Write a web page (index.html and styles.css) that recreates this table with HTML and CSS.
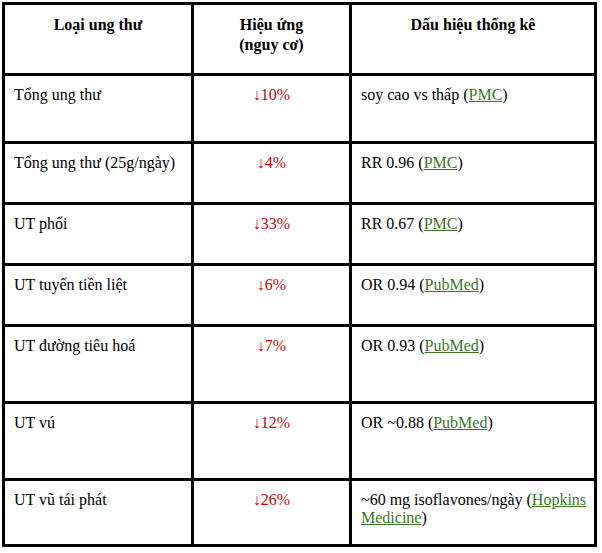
FILE: index.html
```html
<!DOCTYPE html>
<html lang="vi">
<head>
<meta charset="utf-8">
<link rel="stylesheet" href="styles.css">
</head>
<body>
<table class="data">
  <colgroup>
    <col class="c1"><col class="c2"><col class="c3">
  </colgroup>
  <thead>
    <tr class="h-head">
      <th>Loại ung thư</th>
      <th>Hiệu ứng<br>(nguy cơ)</th>
      <th>Dấu hiệu thống kê</th>
    </tr>
  </thead>
  <tbody>
    <tr class="h68">
      <td>Tổng ung thư</td>
      <td class="eff">↓10%</td>
      <td>soy cao vs thấp (<a href="#">PMC</a>)</td>
    </tr>
    <tr class="h61">
      <td>Tổng ung thư (25g/ngày)</td>
      <td class="eff">↓4%</td>
      <td>RR 0.96 (<a href="#">PMC</a>)</td>
    </tr>
    <tr class="h61">
      <td>UT phổi</td>
      <td class="eff">↓33%</td>
      <td>RR 0.67 (<a href="#">PMC</a>)</td>
    </tr>
    <tr class="h61">
      <td>UT tuyến tiền liệt</td>
      <td class="eff">↓6%</td>
      <td>OR 0.94 (<a href="#">PubMed</a>)</td>
    </tr>
    <tr class="h77">
      <td>UT đường tiêu hoá</td>
      <td class="eff">↓7%</td>
      <td>OR 0.93 (<a href="#">PubMed</a>)</td>
    </tr>
    <tr class="h77">
      <td>UT vú</td>
      <td class="eff">↓12%</td>
      <td>OR ~0.88 (<a href="#">PubMed</a>)</td>
    </tr>
    <tr class="h66">
      <td>UT vũ tái phát</td>
      <td class="eff">↓26%</td>
      <td>~60 mg isoflavones/ngày (<a href="#">Hopkins Medicine</a>)</td>
    </tr>
  </tbody>
</table>
</body>
</html>
```
FILE: styles.css
```css
html, body {
  margin: 0;
  padding: 0;
  background: #ffffff;
}

body {
  padding: 2px;
  font-family: "Liberation Serif", "Times New Roman", serif;
  font-size: 16px;
  color: #000000;
}

.data {
  table-layout: fixed;
  width: 595px;
  border-spacing: 0;
  border-top: 3px solid #000;
  border-left: 3px solid #000;
}

.c1 { width: 189px; }
.c2 { width: 158px; }
.c3 { width: 245px; }

.data th,
.data td {
  box-sizing: border-box;
  border-right: 3px solid #000;
  border-bottom: 3px solid #000;
  padding: 10px 3px 10px 9px;
  vertical-align: top;
  text-align: left;
  line-height: 18px;
}

.data th {
  font-weight: bold;
  text-align: center;
  line-height: 20px;
  padding: 10px 6px 10px 6px;
}

.data td.eff {
  text-align: center;
  padding: 10px 6px;
  color: #cc0000;
}

.data a {
  color: #38761d;
  text-decoration: underline;
}

.h-head { height: 71px; }
.h68 { height: 68px; }
.h61 { height: 61px; }
.h77 { height: 77px; }
.h66 { height: 66px; }
```
